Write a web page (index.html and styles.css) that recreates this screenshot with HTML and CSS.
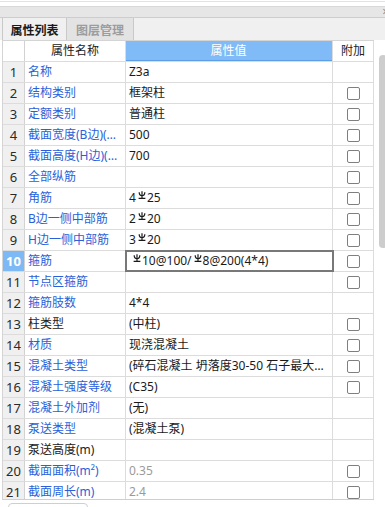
FILE: index.html
```html
<!DOCTYPE html>
<html lang="zh">
<head>
<meta charset="utf-8">
<title>属性列表</title>
<link rel="stylesheet" href="styles.css">
</head>
<body>
<div class="top"></div>
<div class="titlebar"><span class="close">×</span></div>
<div class="tabs">
  <div class="tab active">属性列表</div>
  <div class="tab">图层管理</div>
</div>
<div class="grid">
  <div class="table">
    <div class="row head">
      <div class="c num"></div>
      <div class="c name hc">属性名称</div>
      <div class="c val hc blue">属性值</div>
      <div class="c att hc">附加</div>
    </div>
    <div class="body">
      <div class="row"><div class="c num">1</div><div class="c name">名称</div><div class="c val">Z3a</div><div class="c att"></div></div>
      <div class="row"><div class="c num">2</div><div class="c name">结构类别</div><div class="c val">框架柱</div><div class="c att"><span class="cb"></span></div></div>
      <div class="row"><div class="c num">3</div><div class="c name">定额类别</div><div class="c val">普通柱</div><div class="c att"><span class="cb"></span></div></div>
      <div class="row"><div class="c num">4</div><div class="c name">截面宽度(B边)(mm)</div><div class="c val">500</div><div class="c att"><span class="cb"></span></div></div>
      <div class="row"><div class="c num">5</div><div class="c name">截面高度(H边)(mm)</div><div class="c val">700</div><div class="c att"><span class="cb"></span></div></div>
      <div class="row"><div class="c num">6</div><div class="c name">全部纵筋</div><div class="c val"></div><div class="c att"><span class="cb"></span></div></div>
      <div class="row"><div class="c num">7</div><div class="c name">角筋</div><div class="c val">4<svg class="sym" viewBox="0 0 8 8"><path d="M4 0.3V7.3M0.6 7.3H7.4M1.2 1.2Q1.2 4.6 4 4.6Q6.8 4.6 6.8 1.2"/></svg>25</div><div class="c att"><span class="cb"></span></div></div>
      <div class="row"><div class="c num">8</div><div class="c name">B边一侧中部筋</div><div class="c val">2<svg class="sym" viewBox="0 0 8 8"><path d="M4 0.3V7.3M0.6 7.3H7.4M1.2 1.2Q1.2 4.6 4 4.6Q6.8 4.6 6.8 1.2"/></svg>20</div><div class="c att"><span class="cb"></span></div></div>
      <div class="row"><div class="c num">9</div><div class="c name">H边一侧中部筋</div><div class="c val">3<svg class="sym" viewBox="0 0 8 8"><path d="M4 0.3V7.3M0.6 7.3H7.4M1.2 1.2Q1.2 4.6 4 4.6Q6.8 4.6 6.8 1.2"/></svg>20</div><div class="c att"><span class="cb"></span></div></div>
      <div class="row"><div class="c num sel">10</div><div class="c name">箍筋</div><div class="c val edit"><svg class="sym" viewBox="0 0 8 8"><path d="M4 0.3V7.3M0.6 7.3H7.4M1.2 1.2Q1.2 4.6 4 4.6Q6.8 4.6 6.8 1.2"/></svg>10@100/<svg class="sym" viewBox="0 0 8 8"><path d="M4 0.3V7.3M0.6 7.3H7.4M1.2 1.2Q1.2 4.6 4 4.6Q6.8 4.6 6.8 1.2"/></svg>8@200(4*4)</div><div class="c att"><span class="cb"></span></div></div>
      <div class="row"><div class="c num">11</div><div class="c name">节点区箍筋</div><div class="c val"></div><div class="c att"><span class="cb"></span></div></div>
      <div class="row"><div class="c num">12</div><div class="c name">箍筋肢数</div><div class="c val">4*4</div><div class="c att"></div></div>
      <div class="row"><div class="c num">13</div><div class="c name dark">柱类型</div><div class="c val">(中柱)</div><div class="c att"><span class="cb"></span></div></div>
      <div class="row"><div class="c num">14</div><div class="c name">材质</div><div class="c val">现浇混凝土</div><div class="c att"><span class="cb"></span></div></div>
      <div class="row"><div class="c num">15</div><div class="c name">混凝土类型</div><div class="c val">(碎石混凝土 坍落度30-50 石子最大粒径40mm)</div><div class="c att"><span class="cb"></span></div></div>
      <div class="row"><div class="c num">16</div><div class="c name">混凝土强度等级</div><div class="c val">(C35)</div><div class="c att"><span class="cb"></span></div></div>
      <div class="row"><div class="c num">17</div><div class="c name">混凝土外加剂</div><div class="c val">(无)</div><div class="c att"></div></div>
      <div class="row"><div class="c num">18</div><div class="c name">泵送类型</div><div class="c val">(混凝土泵)</div><div class="c att"></div></div>
      <div class="row"><div class="c num">19</div><div class="c name dark">泵送高度(m)</div><div class="c val"></div><div class="c att"></div></div>
      <div class="row"><div class="c num">20</div><div class="c name">截面面积(m²)</div><div class="c val gray">0.35</div><div class="c att"><span class="cb"></span></div></div>
      <div class="row"><div class="c num">21</div><div class="c name">截面周长(m)</div><div class="c val gray">2.4</div><div class="c att"><span class="cb"></span></div></div>
    </div>
  </div>
  <div class="scroll"><div class="thumb"></div></div>
</div>
<div class="bottom"><div class="btn"></div></div>
</body>
</html>
```
FILE: styles.css
```css
* { box-sizing: border-box; }
html, body { margin: 0; padding: 0; }
body {
  width: 385px;
  height: 507px;
  overflow: hidden;
  background: #fff;
  font-family: "Noto Sans", "Noto Sans CJK SC", sans-serif;
  font-size: 12px;
  color: #1a1a1a;
}
.top {
  margin-top: 1px;
  height: 5px;
  border-top: 1px solid #e2e2e2;
}
.titlebar {
  height: 12px;
  background: #e6e6e6;
  border-top: 1px solid #d8d8d8;
  border-bottom: 1px solid #cdcdcd;
  display: flex;
  justify-content: flex-end;
  overflow: hidden;
}
.close {
  font-size: 12px;
  line-height: 10px;
  color: #8a8a8a;
  margin-right: -4px;
}
.tabs {
  height: 22px;
  background: #f0f0f0;
  padding-left: 2px;
  display: flex;
}
.tab {
  width: 67px;
  border-right: 1px solid #c9c9c9;
  background: #e3e3e3;
  color: #9c9c9c;
  font-family: "Noto Sans CJK SC", sans-serif;
  font-size: 12px;
  font-weight: bold;
  display: flex;
  align-items: center;
  justify-content: center;
}
.tab.active {
  width: 65px;
  border-left: 1px solid #c9c9c9;
  background: #f0f0f0;
  color: #1a1a1a;
}
.grid {
  display: flex;
  padding-left: 2px;
}
.table {
  width: 372px;
  border-left: 1px solid #d4d4d4;
  border-top: 1px solid #d4d4d4;
  border-bottom: 1px solid #cfcfcf;
}
.row {
  display: grid;
  grid-template-columns: 22px 101px 207px 41px;
  height: 21px;
  border-bottom: 1px solid #dcdcdc;
}
.body {
  height: 437px;
  overflow: hidden;
}
.c {
  border-right: 1px solid #dcdcdc;
  display: flex;
  align-items: center;
  white-space: nowrap;
  overflow: hidden;
  line-height: 20px;
}
.num {
  background: #f0f0f0;
  justify-content: center;
  font-size: 13px;
  color: #2a2a2a;
  border-right-color: #d2d2d2;
}
.num.sel {
  background: #7db9f5;
  color: #fff;
  font-weight: bold;
}
.head .num { background: #fff; }
.name {
  padding-left: 3px;
  color: #2b5fd9;
  display: block;
  text-overflow: ellipsis;
  padding-right: 3px;
}
.name.dark { color: #222; }
.val {
  padding-left: 3px;
  padding-right: 4px;
  display: block;
  text-overflow: ellipsis;
}
.val.gray { color: #9a9a9a; }
.val.edit {
  outline: 2px solid #787878;
  outline-offset: -1px;
  padding-left: 5px;
}
.hc {
  justify-content: center;
  display: flex;
  color: #222;
}
.hc.blue {
  background: #80bbf7;
  color: #fff;
  box-shadow: inset 0 -1px 0 #5d9fe6;
}
.att { justify-content: center; }
.cb {
  width: 13px;
  height: 13px;
  border: 1px solid #7f7f7f;
  border-radius: 2px;
  background: #fff;
}
.sym {
  width: 8px;
  height: 8px;
  margin: 0 1px 0 2px;
  vertical-align: 3px;
  fill: none;
  stroke: #1a1a1a;
  stroke-width: 1.2;
}
.scroll {
  width: 11px;
  padding-left: 5px;
}
.thumb {
  margin-top: 15px;
  width: 8px;
  height: 193px;
  border-radius: 4px;
  background: #cdcdcd;
}
.bottom {
  padding-top: 3px;
  padding-left: 8px;
}
.btn {
  width: 80px;
  height: 20px;
  border: 1px solid #cfcfcf;
  border-radius: 4px;
}
```
